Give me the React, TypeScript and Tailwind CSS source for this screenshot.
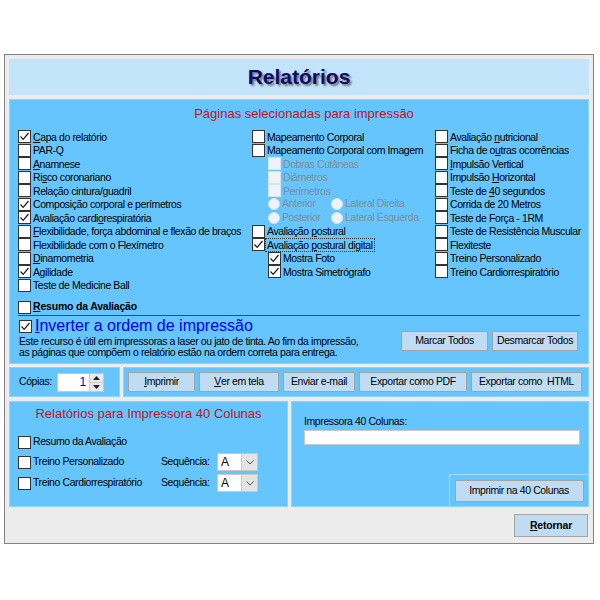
import React from "react"

function Box({ checked = false, disabled = false }: { checked?: boolean; disabled?: boolean }) {
    return (
        <span className={`w-[13px] h-[13px] shrink-0 border flex items-center justify-center ${disabled ? "border-[#d6e2ec] bg-[#eef3f7]" : "border-[#333333] bg-white"}`}>
            {checked && (
                <svg width="11" height="11" viewBox="0 0 11 11">
                    <path d="M1.5 5.5 L4.2 8.3 L9.5 2" stroke="#1a1a1a" strokeWidth="1.2" fill="none" />
                </svg>
            )}
        </span>
    )
}

function Radio() {
    return <span className="w-[12px] h-[12px] shrink-0 rounded-full bg-[#eef3f7] border border-[#d6e2ec]" />
}

function U({ children }: { children: React.ReactNode }) {
    return <span className="underline underline-offset-[1px]">{children}</span>
}

function Check({ label, checked, disabled, focus }: { label: React.ReactNode; checked?: boolean; disabled?: boolean; focus?: boolean }) {
    return (
        <div className="h-[13.5px] flex items-center">
            <Box checked={checked} disabled={disabled} />
            <span className={`ml-[1px] px-[1px] leading-[12px] whitespace-nowrap ${disabled ? "text-[#7f8d9a]" : "text-black"} ${focus ? "outline outline-1 outline-dotted outline-[#333]" : ""}`}>
                {label}
            </span>
        </div>
    )
}

function Btn({ children, className = "" }: { children: React.ReactNode; className?: string }) {
    return (
        <div className={`h-[20px] bg-[#c0dcf2] border border-[#a3a3a3] flex items-center justify-center whitespace-nowrap text-black ${className}`}>
            {children}
        </div>
    )
}

function Select() {
    return (
        <div className="w-[41px] h-[18px] bg-white border border-[#c8c8c8] flex items-center">
            <span className="flex-1 pl-[3px] text-[12px] tracking-normal">A</span>
            <span className="w-[16px] h-[16px] bg-[#e4e4e4] border-l border-[#c8c8c8] flex items-center justify-center">
                <svg width="8" height="5" viewBox="0 0 8 5">
                    <path d="M0.5 0.5 L4 4 L7.5 0.5" stroke="#555" fill="none" />
                </svg>
            </span>
        </div>
    )
}

export default function App() {
    return (
        <div className="w-[600px] h-[600px] bg-white pt-[54px] pl-[4px] font-['Liberation_Sans',Arial,sans-serif] text-[10.5px] tracking-[-0.4px] text-black">
            <div className="w-[590px] h-[490px] border border-[#828282] bg-[#ececec] p-[4px] flex flex-col">
                {/* title */}
                <div className="h-[36px] shrink-0 bg-[#c3e5fb] flex items-center justify-center">
                    <span className="text-[21px] font-bold tracking-normal text-[#0b0b6b] [text-shadow:2px_2px_2px_#7a7a7a]">Relatórios</span>
                </div>

                {/* main panel */}
                <div className="mt-[4px] h-[265px] shrink-0 bg-[#66c5fc] border border-[#8ad4fd] pt-[6px] flex flex-col">
                    <div className="h-[16px] shrink-0 leading-[16px] text-[13px] tracking-normal text-[#c0141e] text-center pl-[10px]">Páginas selecionadas para impressão</div>
                    <div className="mt-[8px] h-[170px] shrink-0 pl-[8px] flex">
                        <div className="w-[234px] flex flex-col">
                            <Check checked label={<><U>C</U>apa do relatório</>} />
                            <Check label="PAR-Q" />
                            <Check label={<><U>A</U>namnese</>} />
                            <Check label={<>Ri<U>s</U>co coronariano</>} />
                            <Check label="Relação cintura/guadril" />
                            <Check checked label="Composição corporal e perímetros" />
                            <Check checked label={<>Avaliação cardi<U>o</U>respiratória</>} />
                            <Check label={<><U>F</U>lexibilidade, força abdominal e flexão de braços</>} />
                            <Check label="Flexibilidade com o Flexímetro" />
                            <Check label={<><U>D</U>inamometria</>} />
                            <Check checked label={<>A<U>g</U>ilidade</>} />
                            <Check label="Teste de Medicine Ball" />
                        </div>
                        <div className="w-[183px] flex flex-col">
                            <Check label="Mapeamento Corporal" />
                            <Check label="Mapeamento Corporal com Imagem" />
                            <div className="pl-[16px]">
                                <Check disabled label="Dobras Cutâneas" />
                                <Check disabled label="Diâmetros" />
                                <Check disabled label="Perímetros" />
                                <div className="h-[13.5px] flex items-center text-[#7f8d9a]">
                                    <div className="w-[63px] flex items-center"><Radio /><span className="ml-[2px]">Anterior</span></div>
                                    <div className="flex items-center"><Radio /><span className="ml-[2px]">Lateral Direita</span></div>
                                </div>
                                <div className="h-[13.5px] flex items-center text-[#7f8d9a]">
                                    <div className="w-[63px] flex items-center"><Radio /><span className="ml-[2px]">Posterior</span></div>
                                    <div className="flex items-center"><Radio /><span className="ml-[2px]">Lateral Esquerda</span></div>
                                </div>
                            </div>
                            <Check label={<>Avaliação <U>p</U>ostural</>} />
                            <Check checked focus label={<>Avaliação <U>p</U>ostural digital</>} />
                            <div className="pl-[16px]">
                                <Check checked label="Mostra Foto" />
                                <Check checked label="Mostra Simetrógrafo" />
                            </div>
                        </div>
                        <div className="flex-1 flex flex-col">
                            <Check label={<>Avaliação <U>n</U>utricional</>} />
                            <Check label={<>Ficha de o<U>u</U>tras ocorrências</>} />
                            <Check label={<><U>I</U>mpulsão Vertical</>} />
                            <Check label={<>Impulsão <U>H</U>orizontal</>} />
                            <Check label={<>Teste de <U>4</U>0 segundos</>} />
                            <Check label="Corrida de 20 Metros" />
                            <Check label="Teste de Força - 1RM" />
                            <Check label="Teste de Resistência Muscular" />
                            <Check label="Flexiteste" />
                            <Check label="Treino Personalizado" />
                            <Check label="Treino Cardiorrespiratório" />
                        </div>
                    </div>
                    <div className="h-[14px] shrink-0 pl-[8px] flex items-center">
                        <Box />
                        <span className="ml-[2px] font-bold tracking-[-0.2px]"><U>R</U>esumo da Avaliação</span>
                    </div>
                    <div className="mt-[1px] ml-[8px] mr-[8px] h-[1px] shrink-0 bg-[#c0141e]" />
                    <div className="mt-[1px] flex pl-[9px] pr-[10px]">
                        <div className="flex-1 flex flex-col">
                            <div className="h-[18px] flex items-center">
                                <Box checked />
                                <span className="ml-[3px] text-[16px] tracking-normal text-[#0000ee] leading-[18px]"><U>I</U>nverter a ordem de impressão</span>
                            </div>
                            <div className="mt-[1px] leading-[11px] whitespace-nowrap">Este recurso é útil em impressoras a laser ou jato de tinta. Ao fim da impressão,</div>
                            <div className="leading-[11px] whitespace-nowrap">as páginas que compõem o relatório estão na ordem correta para entrega.</div>
                        </div>
                        <div className="mt-[14px] flex gap-[4px]">
                            <Btn className="w-[87px]">Marcar Todos</Btn>
                            <Btn className="w-[86px]">Desmarcar Todos</Btn>
                        </div>
                    </div>
                </div>

                {/* print row */}
                <div className="mt-[3px] h-[30px] shrink-0 flex gap-[3px]">
                    <div className="w-[111px] bg-[#66c5fc] border border-[#8ad4fd] flex items-center pl-[9px]">
                        <span>Cópias:</span>
                        <div className="ml-[5px] w-[47px] h-[19px] bg-white border border-[#c8c8c8] flex">
                            <span className="flex-1 text-right pr-[3px] text-[#0000cc] text-[12px] leading-[17px]">1</span>
                            <div className="w-[14px] flex flex-col border-l border-[#c8c8c8]">
                                <div className="flex-1 bg-[#eaeaea] border-b border-[#c8c8c8] flex items-center justify-center">
                                    <svg width="7" height="4" viewBox="0 0 7 4"><path d="M0 4 L3.5 0 L7 4 Z" fill="#222" /></svg>
                                </div>
                                <div className="flex-1 bg-[#eaeaea] flex items-center justify-center">
                                    <svg width="7" height="4" viewBox="0 0 7 4"><path d="M0 0 L3.5 4 L7 0 Z" fill="#222" /></svg>
                                </div>
                            </div>
                        </div>
                    </div>
                    <div className="flex-1 bg-[#66c5fc] border border-[#8ad4fd] flex items-center pl-[4px] gap-[4px]">
                        <Btn className="w-[67px]"><U>I</U>mprimir</Btn>
                        <Btn className="w-[80px]"><U>V</U>er em tela</Btn>
                        <Btn className="w-[72px]">Enviar e-mail</Btn>
                        <Btn className="w-[108px]">Exportar como PDF</Btn>
                        <Btn className="w-[111px]">Exportar como &nbsp;HTML</Btn>
                    </div>
                </div>

                {/* 40 columns */}
                <div className="mt-[4px] h-[106px] shrink-0 flex gap-[3px]">
                    <div className="w-[279px] bg-[#66c5fc] border border-[#8ad4fd] pt-[4px] flex flex-col">
                        <div className="h-[16px] leading-[16px] text-[13px] tracking-normal text-[#c0141e] text-center">Relatórios para Impressora 40 Colunas</div>
                        <div className="mt-[12px] pl-[8px] h-[16px] flex items-center">
                            <Box />
                            <span className="ml-[2px]">Resumo da Avaliação</span>
                        </div>
                        <div className="mt-[3px] pl-[8px] h-[18px] flex items-center">
                            <div className="w-[143px] flex items-center">
                                <Box />
                                <span className="ml-[2px]">Treino Personalizado</span>
                            </div>
                            <span className="w-[56px]">Sequência:</span>
                            <Select />
                        </div>
                        <div className="mt-[3px] pl-[8px] h-[18px] flex items-center">
                            <div className="w-[143px] flex items-center">
                                <Box />
                                <span className="ml-[2px]">Treino Cardiorrespiratório</span>
                            </div>
                            <span className="w-[56px]">Sequência:</span>
                            <Select />
                        </div>
                    </div>
                    <div className="flex-1 bg-[#66c5fc] border border-[#8ad4fd] flex flex-col">
                        <div className="mt-[12px] pl-[12px] leading-[14px]">Impressora 40 Colunas:</div>
                        <div className="mt-[2px] ml-[12px] mr-[8px] h-[15px] bg-white border border-[#c8c8c8]" />
                        <div className="mt-auto self-end w-[139px] h-[32px] border-t border-l border-[#a8dcfd] flex items-center justify-center">
                            <Btn className="w-[129px] h-[22px]">Imprimir na 40 Colunas</Btn>
                        </div>
                    </div>
                </div>

                <div className="mt-[7px] flex justify-end pr-[1px]">
                    <div className="w-[74px] h-[23px] bg-[#c0dcf2] border border-[#a3a3a3] flex items-center justify-center font-bold tracking-[-0.2px]">
                        <U>R</U>etornar
                    </div>
                </div>
            </div>
        </div>
    )
}
